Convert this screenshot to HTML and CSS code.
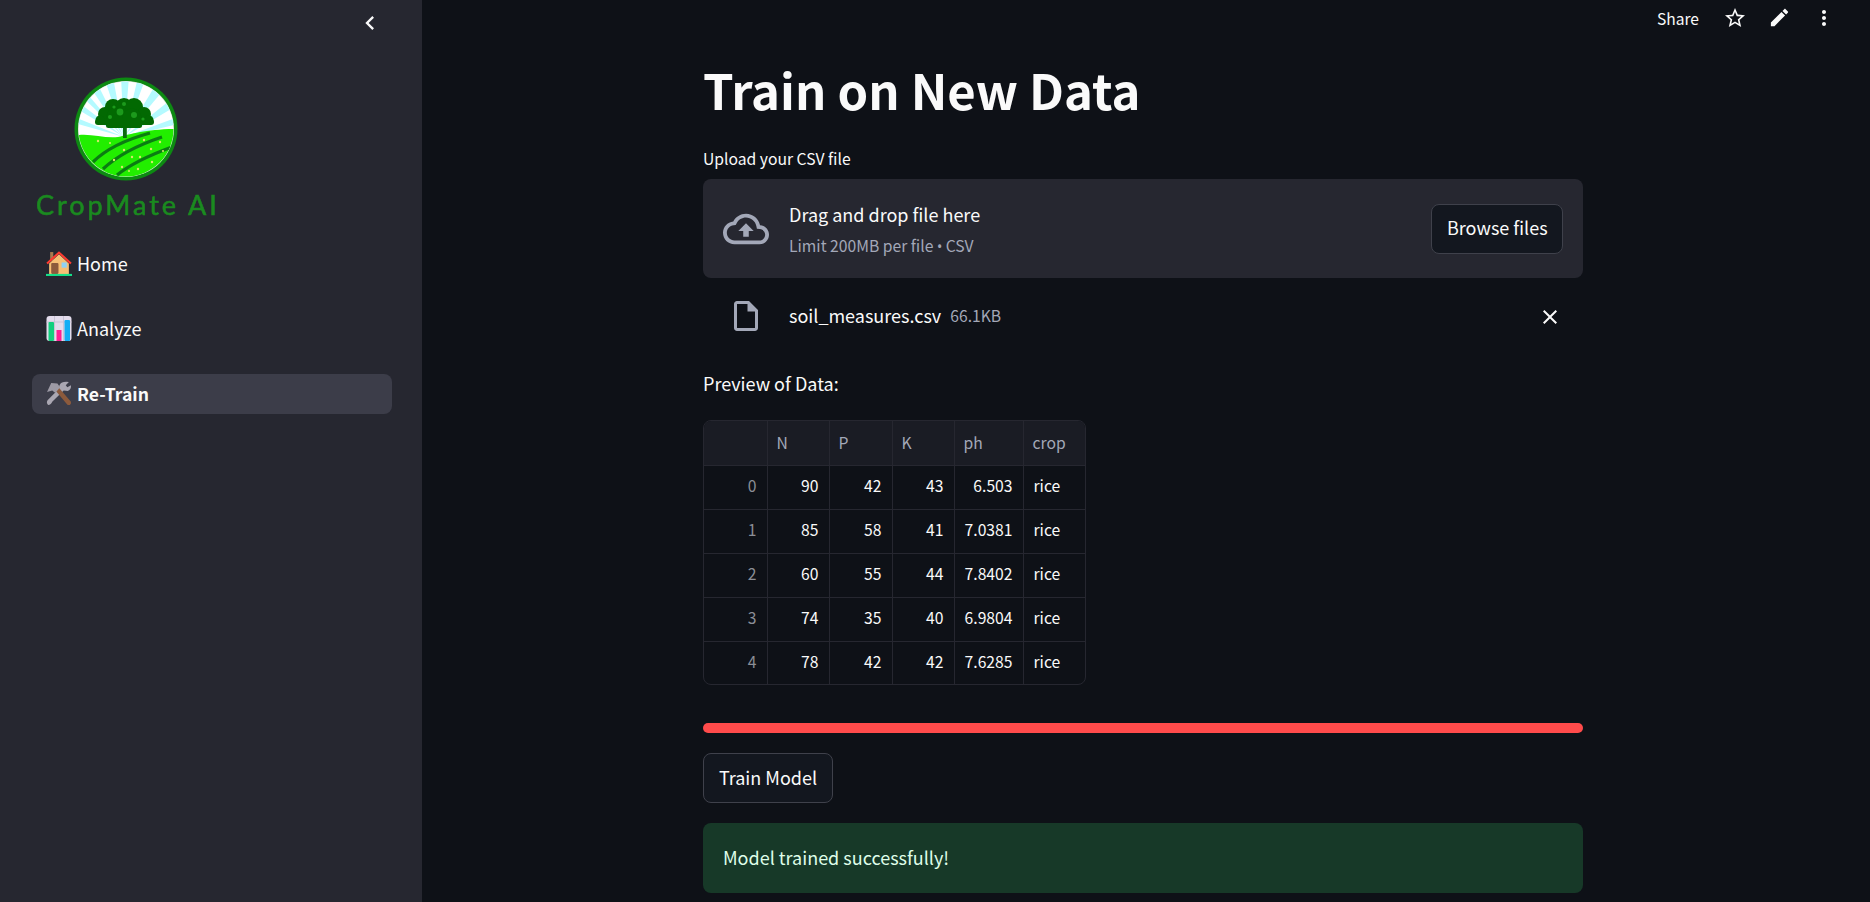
FILE: index.html
```html
<!DOCTYPE html>
<html lang="en">
<head>
<meta charset="utf-8">
<title>Train on New Data</title>
<link rel="stylesheet" href="styles.css">
</head>
<body>
<div class="app">
  <aside class="sidebar">
    <div class="side-top">
      <svg class="chevron" viewBox="0 0 24 24"><path d="M15.41 7.41L14 6l-6 6 6 6 1.41-1.41L10.83 12z"/></svg>
    </div>
    <div class="logo">
      <svg class="logo-mark" viewBox="0 0 104 104">
        <defs><clipPath id="disc"><circle cx="52" cy="52" r="47.5"/></clipPath></defs>
        <circle cx="52" cy="52" r="51.5" fill="#0d8a12"/>
        <circle cx="52" cy="52" r="48" fill="#c9d4c9"/>
        <g clip-path="url(#disc)">
          <rect width="104" height="104" fill="#ffffff"/>
          <g fill="#b4faff">
            <polygon points="50,60 30,0 39,0"/>
            <polygon points="50,60 47,0 55,0"/>
            <polygon points="50,60 64,0 72,0"/>
            <polygon points="50,60 84,4 92,10"/>
            <polygon points="50,60 100,20 104,28"/>
            <polygon points="50,60 104,40 104,47"/>
            <polygon points="50,60 12,4 20,0"/>
            <polygon points="50,60 0,12 4,6"/>
            <polygon points="50,60 0,30 0,22"/>
            <polygon points="50,60 0,46 0,40"/>
          </g>
          <path d="M0 59 C14 55 30 62 44 60 C58 57 72 52 104 52 V104 H0Z" fill="#22ee00"/>
          <g fill="none" stroke="#0b7d12" stroke-width="3.2">
            <path d="M19 85 C34 70 54 62 76 56"/>
            <path d="M29 92 C44 78 64 68 88 60"/>
            <path d="M43 98 C58 86 76 78 98 70"/>
          </g>
          <g fill="#d8e86a">
            <circle cx="24" cy="64" r="1.2"/><circle cx="36" cy="66" r="1"/><circle cx="70" cy="63" r="1.2"/><circle cx="86" cy="65" r="1.2"/><circle cx="50" cy="73" r="1.2"/><circle cx="77" cy="72" r="1.2"/><circle cx="89" cy="74" r="1"/><circle cx="40" cy="83" r="1.2"/><circle cx="58" cy="80" r="1.2"/><circle cx="66" cy="80" r="1.2"/><circle cx="48" cy="90" r="1.2"/><circle cx="64" cy="92" r="1.2"/><circle cx="78" cy="85" r="1.2"/><circle cx="55" cy="94" r="1"/>
          </g>
        </g>
        <rect x="49" y="48" width="3.8" height="13" fill="#0a6a10"/>
        <g fill="#026902">
          <circle cx="50" cy="30" r="9"/><circle cx="39" cy="30" r="8"/><circle cx="60" cy="30" r="9"/><circle cx="31" cy="37" r="7"/><circle cx="70" cy="37" r="7"/><circle cx="26" cy="43" r="4.5"/><circle cx="75" cy="43" r="4.5"/><circle cx="42" cy="40" r="9.5"/><circle cx="58" cy="41" r="9.5"/><rect x="21" y="42" width="59" height="6" rx="3"/><rect x="32" y="46" width="36" height="5" rx="2.5"/>
        </g>
        <g fill="#1c9a1c">
          <circle cx="46" cy="35" r="3.4"/><circle cx="60" cy="38" r="3"/><circle cx="50" cy="27" r="2"/><circle cx="36" cy="40" r="2"/><circle cx="69" cy="42" r="1.6"/><circle cx="40" cy="30" r="1.6"/>
        </g>
      </svg>
      <div class="logo-text">CropMate AI</div>
    </div>
    <nav class="nav">
      <a class="nav-item">
        <svg class="emoji" viewBox="0 0 25 24">
          <rect x="4" y="1" width="3" height="8" fill="#a87a4f"/>
          <polygon points="12.5,3 22,12 22,22 3,22 3,12" fill="#f6bf75"/>
          <path d="M1 12 L12.5 1.5 L24 12" fill="none" stroke="#ff3b30" stroke-width="2"/>
          <rect x="5" y="11.5" width="7" height="10.5" rx="1" fill="#8c5a3c"/>
          <rect x="15" y="11" width="5" height="5" fill="#8ed1f5"/>
          <rect x="0" y="22" width="25" height="2" fill="#14e08a"/>
        </svg>
        <span>Home</span>
      </a>
      <a class="nav-item">
        <svg class="emoji" viewBox="0 0 25 25">
          <rect width="25" height="25" rx="3" fill="#e3dcec"/>
          <path d="M8 0V25M17 0V25M0 6H25" stroke="#c9c3d6" stroke-width="1" fill="none"/>
          <rect x="2" y="6" width="5.5" height="19" rx="1" fill="#12cf7e"/>
          <rect x="10" y="14" width="5" height="11" fill="#ff1f93"/>
          <rect x="18" y="4" width="5.5" height="21" rx="1" fill="#12aef5"/>
        </svg>
        <span>Analyze</span>
      </a>
      <a class="nav-item nav-active">
        <svg class="emoji" viewBox="0 0 25 24">
          <path d="M22 1 L19 4 L20.5 6 L24 4 Q24.5 8 21 9.5 L17 9 L6 20 Q5 23 2 23 Q0 21 1.5 18.5 L12 8 L13 4 Q15 0 22 1Z" fill="#aaa7b2"/>
          <path d="M8.5 8.5 L12 6 L24 20 Q24.5 22 23 23 Q21 23.5 20 22Z" fill="#8c5a3c"/>
          <path d="M5 2 L11 2.5 L13.5 6 L9 11.5 L6 9 L1 10.5 Z" fill="#9d9aa5"/>
        </svg>
        <span>Re-Train</span>
      </a>
    </nav>
  </aside>
  <main class="main">
    <header class="topbar">
      <span class="share">Share</span>
      <svg class="tb-icon star" viewBox="0 0 24 24"><path d="M22 9.24l-7.19-.62L12 2 9.19 8.63 2 9.24l5.46 4.73L5.82 21 12 17.27 18.18 21l-1.63-7.03L22 9.24zM12 15.4l-3.76 2.27 1-4.28-3.32-2.88 4.38-.38L12 6.1l1.71 4.04 4.38.38-3.32 2.88 1 4.28L12 15.4z"/></svg>
      <svg class="tb-icon pencil" viewBox="0 0 24 24"><path d="M3 17.25V21h3.75L17.81 9.94l-3.75-3.75L3 17.25zM20.71 7.04c.39-.39.39-1.02 0-1.41l-2.34-2.34c-.39-.39-1.02-.39-1.41 0l-1.83 1.83 3.75 3.75 1.83-1.83z"/></svg>
      <svg class="tb-icon dots" viewBox="0 0 24 24"><path d="M12 8c1.1 0 2-.9 2-2s-.9-2-2-2-2 .9-2 2 .9 2 2 2zm0 2c-1.1 0-2 .9-2 2s.9 2 2 2 2-.9 2-2-.9-2-2-2zm0 6c-1.1 0-2 .9-2 2s.9 2 2 2 2-.9 2-2-.9-2-2-2z"/></svg>
    </header>
    <section class="content">
      <h1 class="title">Train on New Data</h1>
      <label class="label">Upload your CSV file</label>
      <div class="dropzone">
        <svg class="cloud" viewBox="0 0 24 24"><path d="M19.35 10.04C18.67 6.59 15.64 4 12 4 9.11 4 6.6 5.64 5.35 8.04 2.34 8.36 0 10.91 0 14c0 3.31 2.69 6 6 6h13c2.76 0 5-2.24 5-5 0-2.64-2.05-4.78-4.65-4.96zM19 18H6c-2.21 0-4-1.79-4-4 0-2.05 1.53-3.76 3.56-3.97l1.07-.11.5-.95C8.08 7.14 9.94 6 12 6c2.62 0 4.88 1.86 5.39 4.43l.3 1.5 1.53.11c1.56.1 2.78 1.41 2.78 2.96 0 1.65-1.35 3-3 3zM8 13h2.55v3h2.9v-3H16l-4-4z"/></svg>
        <div class="drop-text">
          <div class="drop-title">Drag and drop file here</div>
          <div class="drop-sub">Limit 200MB per file <span class="bullet">•</span> CSV</div>
        </div>
        <button class="btn browse">Browse files</button>
      </div>
      <div class="file-row">
        <svg class="file-icon" viewBox="0 0 24 24"><path d="M14 2H6c-1.1 0-1.99.9-1.99 2L4 20c0 1.1.89 2 1.99 2H18c1.1 0 2-.9 2-2V8l-6-6zM6 20V4h7v5h5v11H6z"/></svg>
        <span class="file-name">soil_measures.csv</span>
        <span class="file-size">66.1KB</span>
        <svg class="file-x" viewBox="0 0 24 24"><path d="M19 6.41L17.59 5 12 10.59 6.41 5 5 6.41 10.59 12 5 17.59 6.41 19 12 13.41 17.59 19 19 17.59 13.41 12z"/></svg>
      </div>
      <p class="preview">Preview of Data:</p>
      <div class="table-wrap">
        <table class="df">
          <colgroup><col class="c0"><col class="c1"><col class="c2"><col class="c3"><col class="c4"><col class="c5"></colgroup>
          <thead><tr><th></th><th>N</th><th>P</th><th>K</th><th>ph</th><th>crop</th></tr></thead>
          <tbody>
            <tr><th>0</th><td>90</td><td>42</td><td>43</td><td>6.503</td><td class="txt">rice</td></tr>
            <tr><th>1</th><td>85</td><td>58</td><td>41</td><td>7.0381</td><td class="txt">rice</td></tr>
            <tr><th>2</th><td>60</td><td>55</td><td>44</td><td>7.8402</td><td class="txt">rice</td></tr>
            <tr><th>3</th><td>74</td><td>35</td><td>40</td><td>6.9804</td><td class="txt">rice</td></tr>
            <tr><th>4</th><td>78</td><td>42</td><td>42</td><td>7.6285</td><td class="txt">rice</td></tr>
          </tbody>
        </table>
      </div>
      <div class="progress"></div>
      <button class="btn train">Train Model</button>
      <div class="success">Model trained successfully!</div>
    </section>
  </main>
</div>
</body>
</html>
```
FILE: styles.css
```css
* { box-sizing: border-box; }
html, body { margin: 0; height: 100%; overflow: hidden; }
body {
  background: #0e1117;
  color: #fafafa;
  font-family: "Noto Sans CJK SC", "Noto Sans", sans-serif;
  font-size: 16px;
}
.app { display: flex; height: 902px; overflow: hidden; }

.sidebar {
  width: 422px;
  flex: none;
  background: #262730;
  display: flex;
  flex-direction: column;
}
.side-top { height: 46px; display: flex; align-items: center; justify-content: flex-end; padding-right: 38px; flex: none; }
.chevron { width: 28px; height: 28px; fill: #fafafa; }
.logo { margin-top: 31px; padding-left: 36px; height: 167px; flex: none; }
.logo-mark { display: block; width: 104px; height: 104px; margin-left: 38px; filter: blur(0.4px); }
.logo-text {
  margin-top: 7px;
  font-family: "Lato", sans-serif;
  font-size: 27px;
  font-weight: 400;
  line-height: 34px;
  letter-spacing: 3px;
  color: #1b8a20;
  -webkit-text-stroke: 0.6px #1b8a20;
  white-space: nowrap;
  filter: blur(0.6px);
}
.nav { display: flex; flex-direction: column; gap: 25px; margin: 0 30px 0 32px; }
.nav-item { height: 40px; display: flex; align-items: center; gap: 5px; padding-left: 14px; border-radius: 8px; font-size: 18px; color: #fafafa; }
.nav-item span { padding-bottom: 3px; }
.nav-active { background: #3c3d49; font-weight: 700; font-size: 17.6px; }
.nav-active span { padding-bottom: 2px; }
.emoji { width: 26px; height: 25px; flex: none; margin-bottom: 1px; }

.main { flex: 1; display: flex; flex-direction: column; padding-right: 6px; min-width: 0; }
.topbar { height: 35px; flex: none; display: flex; align-items: center; justify-content: flex-end; padding-right: 28px; }
.share { font-size: 15.6px; line-height: 20px; margin-right: 24px; }
.tb-icon { fill: #fafafa; flex: none; }
.star { width: 24px; height: 24px; margin-right: 21px; }
.pencil { width: 23px; height: 23px; margin-right: 21px; }
.dots { width: 24px; height: 24px; }

.content { width: 880px; align-self: center; }
.title { margin: 25px 0 0; font-size: 49px; line-height: 58px; font-weight: 700; letter-spacing: 0; }
.label { display: block; margin-top: 29px; font-size: 15.7px; line-height: 24px; }
.dropzone { margin-top: 8px; height: 99px; background: #262730; border-radius: 8px; display: flex; align-items: center; padding: 0 20px; }
.cloud { width: 46px; height: 46px; fill: #a3a8b8; flex: none; }
.drop-text { flex: 1; margin-left: 20px; padding-top: 2px; }
.drop-title { font-size: 18px; line-height: 28px; margin-top: -1px; }
.drop-sub { font-size: 15.7px; line-height: 22px; margin-top: 7px; color: #a3a8b8; }
.bullet { font-family: "Noto Sans", sans-serif; font-size: 14px; }
.btn { background: #13171f; color: #fafafa; border: 1px solid #3f414b; border-radius: 8px; font: inherit; font-size: 18px; height: 50px; padding: 0 15px; white-space: nowrap; }
.browse { width: 132px; padding-bottom: 3px; }

.file-row { height: 50px; margin-top: 13px; display: flex; align-items: center; padding-left: 25px; }
.file-icon { width: 36px; height: 36px; fill: #a3a8b8; flex: none; }
.file-name { margin-left: 25px; font-size: 18px; padding-bottom: 2px; }
.file-size { margin-left: 9px; font-size: 15.7px; color: #a3a8b8; padding-bottom: 1px; }
.file-x { width: 24px; height: 24px; fill: #fafafa; margin-left: auto; margin-right: 21px; margin-top: 2px; }

.preview { margin: 28px 0 0; font-size: 18px; line-height: 28px; }

.table-wrap { margin-top: 23px; width: 383px; height: 265px; border: 1px solid #262730; border-radius: 8px; overflow: hidden; }
.df { border-collapse: collapse; table-layout: fixed; width: 381px; font-size: 15.7px; }
.c0 { width: 63px; } .c1 { width: 62px; } .c2 { width: 63px; } .c3 { width: 62px; } .c4 { width: 69px; } .c5 { width: 62px; }
.df th, .df td { height: 44px; padding: 0 10px 2px; border: 1px solid #262730; font-weight: 400; text-align: right; color: #fafafa; line-height: 20px; }
.df thead th { border-top: 0; }
.df tbody tr:last-child > * { border-bottom: 0; }
.df tr > :first-child { border-left: 0; }
.df tr > :last-child { border-right: 0; }
.df thead th { background: #1a1c24; color: #a3a8b8; text-align: left; padding: 0 0 0 9px; }
.df tbody th { color: #8b8e96; }
.df .txt { text-align: left; }

.progress { margin-top: 38px; height: 10px; background: #ff4b4b; border-radius: 5px; }
.train { display: block; margin-top: 20px; width: 130px; padding: 0 0 2px; }
.success { margin-top: 20px; height: 70px; display: flex; align-items: center; padding: 0 0 2px 20px; background: #173928; color: #dffde9; border-radius: 8px; font-size: 18px; }
```
